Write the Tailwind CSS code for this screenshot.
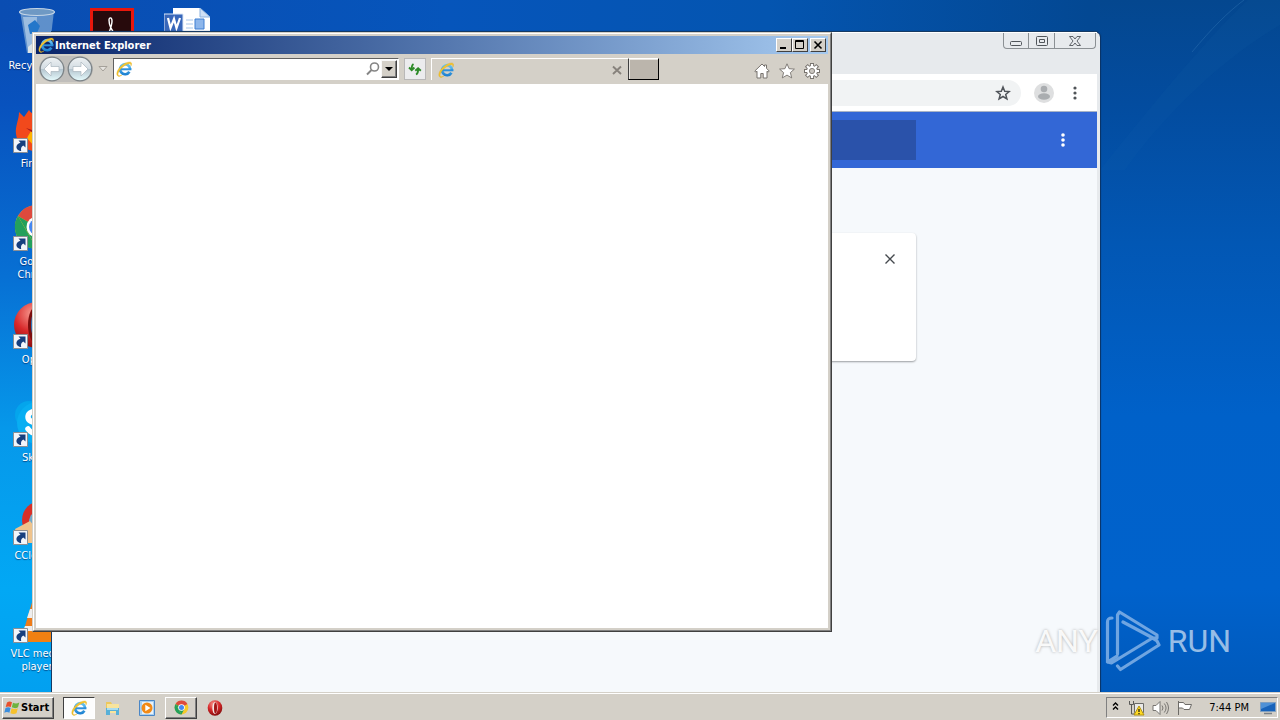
<!DOCTYPE html>
<html lang="en">
<head>
<meta charset="utf-8">
<title>Desktop</title>
<script src="https://cdn.jsdelivr.net/npm/@tailwindcss/browser@4"></script>
</head>
<body>
<svg class="absolute size-0" aria-hidden="true">
  <defs>
    <linearGradient id="ieBlue" gradientUnits="userSpaceOnUse" x1="0" y1="2" x2="0" y2="14"><stop offset="0" stop-color="#6fccf8"/><stop offset="1" stop-color="#1b7fd0"/></linearGradient>
    <linearGradient id="nav" x1="0" y1="0" x2="0" y2="1"><stop offset="0" stop-color="#eef2f4"/><stop offset=".48" stop-color="#d3dce2"/><stop offset=".5" stop-color="#b4c4ce"/><stop offset="1" stop-color="#e6fbfd"/></linearGradient>
    <radialGradient id="operaRed" cx=".4" cy=".25" r=".8"><stop offset="0" stop-color="#f79a90"/><stop offset=".5" stop-color="#d8282a"/><stop offset="1" stop-color="#7c0909"/></radialGradient>
  </defs>
  <symbol id="ie" viewBox="0 0 16 16">
    <path d="M13.400 10.800a5 5 0 1 1 .7-2.600" fill="none" stroke="url(#ieBlue)" stroke-width="2.700"/>
    <path d="M4 8.300h11.400" stroke="#2d90dc" stroke-width="2"/>
    <path d="M1.500 14.800C-.6 12.500 2.200 7 6.700 3.800 10.300 1.100 14.200.2 15.300 1.700c.6.8.3 2.200-.4 3.400.2-1.600-.3-2.400-1.600-2.300C10.500 3 5.500 6.400 3.300 10c-1.400 2.200-1.700 3.900-.6 4.500.8.400 2 .1 3.300-.6-1.800 1.500-3.600 2-4.500.9z" fill="#f4c430" stroke="#d9a514" stroke-width=".3"/>
  </symbol>
  <symbol id="chrome" viewBox="0 0 48 48">
    <circle cx="24" cy="24" r="22" fill="#f6c929"/>
    <path d="M24 24 4.900 13a22 22 0 0 1 38.200 0z" fill="#de4a3d"/>
    <path d="M4.900 13 24 46A22 22 0 0 1 4.900 13z" fill="#23a05c"/>
    <path d="M4.900 13 15 30l9 16 9-17-9-5z" fill="#23a05c"/>
    <circle cx="24" cy="24" r="10.500" fill="#fff"/><circle cx="24" cy="24" r="8" fill="#4587f1"/>
  </symbol>
  <symbol id="opera" viewBox="0 0 48 48">
    <ellipse cx="24" cy="24" rx="22" ry="23" fill="url(#operaRed)"/>
    <ellipse cx="24" cy="24" rx="8" ry="18" fill="#f3e9e6"/>
    <ellipse cx="25.500" cy="24" rx="4.500" ry="16.500" fill="#a01515"/>
  </symbol>
  <symbol id="operaLarge" viewBox="0 0 48 48">
    <ellipse cx="24" cy="24" rx="23" ry="23" fill="url(#operaRed)"/>
    <ellipse cx="25" cy="24" rx="10" ry="20" fill="#7c0d0d"/>
    <ellipse cx="27" cy="24" rx="9" ry="19" fill="#2a7cc4"/>
  </symbol>
  <symbol id="link" viewBox="0 0 15 15">
    <path d="M.5.500h14v14H.5z" fill="#f2f5fa" stroke="#8c8f94"/>
    <path d="M5.500 2.500h7v7L10.300 7.500C8.200 8.700 7.600 10.500 8.200 13 5 12.800 3 10.600 3.500 8.200 3.900 6.400 5.700 5.400 7.500 4.800z" fill="#173f7e"/>
  </symbol>
</svg>

<div class="flex min-h-screen flex-col overflow-hidden bg-[#0060c8] font-['DejaVu_Sans_Condensed','DejaVu_Sans',sans-serif] text-[11px] leading-[13px] text-black">
  <main class="relative flex-1 overflow-hidden bg-[linear-gradient(180deg,#0a4bb0_0%,#0852be_15%,#0770d4_40%,#0698ea_62%,#02a8f4_85%,#02a0f0_100%)]">
    <div class="absolute inset-x-0 top-0 h-8 bg-[linear-gradient(90deg,#0a4db2_0%,#0655bb_35%,#0455b0_60%,#034893_85%,#06498c_100%)]"></div>
    <div class="absolute top-0 right-0 bottom-0 w-[180px] bg-[linear-gradient(180deg,#04478f_0%,#034c9f_15%,#0257b4_35%,#0061c9_60%,#0062cc_85%,#0059bb_100%)]"></div>
    <svg class="absolute top-0 right-0 h-[170px] w-[180px]" viewBox="0 0 180 170" fill="none" aria-hidden="true">
      <path d="M92 52C112 28 128 12 144 0" stroke="#2b6fb0" stroke-opacity=".5"/>
      <path d="M0 170C60 95 110 35 148 0h32v25C120 60 60 120 25 170z" fill="#2170b8" fill-opacity=".08"/>
    </svg>

    <section aria-label="Desktop icons" class="absolute top-0 left-0 flex text-center text-white [text-shadow:0_1px_1px_#0038]">
      <div class="w-[74px]">
        <a href="#" class="flex h-[98px] flex-col items-center gap-1 pt-[7px]">
          <svg class="size-12 shrink-0" viewBox="0 0 48 48"><path d="M7 4h34l-5 42H14z" fill="#83add6" fill-opacity=".7"/><path d="M10 10h14l-2 34h-7z" fill="#d9eaf6" fill-opacity=".5"/><path d="M15 18l7-5 5 6-3 7-7 1zM27 25l7 3-4 8-6-3z" fill="#2477ca"/><path d="M15 40l6-5 10 4 4 7H15z" fill="#dce4e8"/><ellipse cx="24" cy="5" rx="17.500" ry="3.500" fill="#6f99c4" stroke="#c6d6e6" stroke-width="1.200"/></svg>
          <span>Recycle Bin</span></a>
        <a href="#" class="flex h-[98px] flex-col items-center gap-1 pt-[7px]">
          <span class="relative shrink-0"><svg class="size-12" viewBox="0 0 48 48"><path d="M6 7l5 5 5-7c3 5 9 6 15 6 9 3 15 10 14 20-2 10-11 15-22 15C11 46 4 38 3 29c-1-8 3-14 3-22z" fill="#f2491c"/><path d="M18 26c4-3 13-2 18 2l-5 10-11 2-6-7z" fill="#ffb300"/><path d="M13 23l6 2 5-2-4 5z" fill="#a3181c"/></svg><svg class="absolute bottom-0 left-0 size-[15px]"><use href="#link"/></svg></span>
          <span>Firefox</span></a>
        <a href="#" class="flex h-[98px] flex-col items-center gap-1 pt-[7px]">
          <span class="relative shrink-0"><svg class="size-12"><use href="#chrome"/></svg><svg class="absolute bottom-0 left-0 size-[15px]"><use href="#link"/></svg></span>
          <span>Google<br>Chrome</span></a>
        <a href="#" class="flex h-[98px] flex-col items-center gap-1 pt-[7px]">
          <span class="relative shrink-0"><svg class="size-12"><use href="#operaLarge"/></svg><svg class="absolute bottom-0 left-0 size-[15px]"><use href="#link"/></svg></span>
          <span>Opera</span></a>
        <a href="#" class="flex h-[98px] flex-col items-center gap-1 pt-[7px]">
          <span class="relative shrink-0"><svg class="size-12" viewBox="0 0 48 48"><circle cx="16" cy="16" r="14" fill="#04a5ec"/><circle cx="25" cy="24" r="21" fill="#08aef2"/><path d="M33 16c-5-6-18-5-18 2 0 8 18 5 18 12 0 6-13 7-18 0" fill="none" stroke="#fff" stroke-width="5.500" stroke-linecap="round"/></svg><svg class="absolute bottom-0 left-0 size-[15px]"><use href="#link"/></svg></span>
          <span>Skype</span></a>
        <a href="#" class="flex h-[98px] flex-col items-center gap-1 pt-[7px]">
          <span class="relative shrink-0"><svg class="size-12" viewBox="0 0 48 48"><circle cx="28" cy="23" r="19" fill="#d92f27"/><circle cx="28" cy="25" r="12" fill="#72aacb"/><path d="M2 32l15-8 8 10-4 12H6z" fill="#efc38c"/></svg><svg class="absolute bottom-0 left-0 size-[15px]"><use href="#link"/></svg></span>
          <span>CCleaner</span></a>
        <a href="#" class="flex h-[98px] flex-col items-center gap-1 pt-[7px]">
          <span class="relative shrink-0"><svg class="size-12" viewBox="0 0 48 48"><path d="M24 2l4 2 10 34H10L20 4z" fill="#ef7b18"/><path d="M17 14h14l3 9H14zM12 31h24l1 5H10z" fill="#eee"/><path d="M8 36h32l5 11H3z" fill="#f08012"/></svg><svg class="absolute bottom-0 left-0 size-[15px]"><use href="#link"/></svg></span>
          <span class="px-1">VLC media player</span></a>
      </div>
      <a href="#" aria-label="Acrobat Reader" class="flex w-[75px] justify-center pt-2">
        <svg class="size-11" viewBox="0 0 44 44"><path d="M0 0h44v44H0z" fill="#e9170c"/><path d="M3 3h38v38H3z" fill="#270a0c"/><path d="M18 27c2-5 4-9 4-14 0-4-3-4-3-1 0 5 3 11 7 15" fill="none" stroke="#fff" stroke-width="1.400"/></svg></a>
      <a href="#" aria-label="Word document" class="flex w-[75px] justify-center pt-2">
        <svg class="h-12 w-[46px]" viewBox="0 0 46 48"><path d="M9 0h27l10 9v39H9z" fill="#fff"/><path d="M36 0v9h10z" fill="#cfe0f5" stroke="#8cb2df"/><path d="M22 12h7M22 16h7M22 20h7" stroke="#a9c7ea"/><path d="M31 11h9v10h-9z" fill="#8db6eb" stroke="#3f7fd2"/><path d="M0 6h19v18H0z" fill="#3867ba" stroke="#dae7f7"/><path d="M4 10l2.500 10L10 11l2.500 9L16 10" fill="none" stroke="#fff" stroke-width="2.200"/></svg></a>
    </section>

    <section aria-label="Chrome window" class="absolute top-[31px] right-[180px] bottom-0 left-[51px] flex flex-col rounded-tr-md border-t border-l border-[#163a63] bg-[#e7eaed] pr-[3px] text-[#5f6368] shadow-[1px_0_1px_#0a3263]">
      <header class="flex h-[42px] shrink-0 justify-end border-t border-white pr-[1px]">
        <div class="flex h-4 rounded-b border border-t-0 border-[#8b9094] text-[#50555a]">
          <button aria-label="Minimize" class="grid w-[25px] place-items-center border-r border-[#8b9094]"><svg width="12" height="12" fill="none" stroke="currentColor"><rect x=".5" y="6.500" width="11" height="4" rx="1"/></svg></button>
          <button aria-label="Maximize" class="grid w-[26px] place-items-center border-r border-[#8b9094]"><svg width="12" height="10" fill="none" stroke="currentColor"><rect x=".5" y=".5" width="11" height="9" rx="1"/><path d="M3.500 3.500h5v3h-5z"/></svg></button>
          <button aria-label="Close" class="grid w-10 place-items-center"><svg width="12" height="10" fill="none" stroke="currentColor" stroke-width=".9"><path d="M.5.500H4L6 3 8 .5h3.500L8 5l3.500 4.500H8L6 7 4 9.500H.5L4 5z"/></svg></button>
        </div>
      </header>
      <div class="flex h-[37px] shrink-0 items-center gap-[13px] bg-white pr-[14px]">
        <div class="flex h-[26px] flex-1 items-center justify-end rounded-r-full bg-[#f1f3f4] pr-[10px]">
          <button aria-label="Bookmark"><svg width="16" height="16" viewBox="0 0 16 16" fill="none" stroke="#50545a" stroke-width="1.500"><path d="M8 2l1.700 4.300 4.500.3-3.500 2.900 1.200 4.400L8 11.500l-3.900 2.400 1.200-4.400-3.500-2.900 4.500-.3z"/></svg></button>
        </div>
        <button aria-label="Profile"><svg width="20" height="20"><circle cx="10" cy="10" r="10" fill="#dedfe0"/><circle cx="10" cy="6" r="3.300" fill="#aaadb0"/><ellipse cx="10" cy="13.500" rx="6" ry="3.200" fill="#aaadb0"/></svg></button>
        <button aria-label="Chrome menu"><svg width="16" height="16" fill="#505458"><circle cx="8" cy="3" r="1.600"/><circle cx="8" cy="8" r="1.600"/><circle cx="8" cy="13" r="1.600"/></svg></button>
      </div>
      <div class="flex h-[57px] shrink-0 items-center border-t border-[#a9b4c6] bg-[#3367d6] pr-[26px]">
        <div class="h-10 flex-1 bg-[#2a52aa]"></div>
        <button aria-label="Page menu" class="ml-[139px]"><svg width="16" height="16" fill="#fff"><circle cx="8" cy="3" r="1.800"/><circle cx="8" cy="8" r="1.800"/><circle cx="8" cy="13" r="1.800"/></svg></button>
      </div>
      <div class="flex-1 bg-[#f6f9fc] pt-[65px] pr-[181px]">
        <div class="flex h-32 items-start justify-end rounded bg-white pt-5 pr-5 shadow-[0_1px_2px_#9a9da0]">
          <button aria-label="Dismiss"><svg width="12" height="12" stroke="#45494e" stroke-width="1.400"><path d="M1.500 1.500l9 9M10.500 1.500l-9 9"/></svg></button>
        </div>
      </div>
    </section>

    <section aria-label="Internet Explorer window" class="absolute top-8 bottom-[60px] left-[2.5%] flex w-5/8 flex-col border border-t-[#d4d0c8] border-r-[#404040] border-b-[#404040] border-l-[#d4d0c8] bg-[#d4d0c8]">
      <div class="flex flex-1 flex-col border border-t-white border-r-[#808080] border-b-[#808080] border-l-white p-[2px]">
        <header class="flex h-[18px] shrink-0 items-center bg-linear-to-r from-[#0a246a] to-[#a6caf0] pr-[2px] pl-[2px] font-bold text-white">
          <svg class="mr-[1px] size-4"><use href="#ie"/></svg>
          <h1 class="flex-1">Internet Explorer</h1>
          <button aria-label="Minimize" class="grid h-[14px] w-4 place-items-center border border-t-white border-r-[#404040] border-b-[#404040] border-l-white bg-[#d4d0c8]"><svg width="10" height="10"><path d="M1 7h6v2H1z"/></svg></button>
          <button aria-label="Maximize" class="grid h-[14px] w-4 place-items-center border border-t-white border-r-[#404040] border-b-[#404040] border-l-white bg-[#d4d0c8]"><svg width="10" height="10" fill="none" stroke="#000"><path d="M.5.500h8v8h-8zM.5 1.500h8"/></svg></button>
          <button aria-label="Close" class="ml-[2px] grid h-[14px] w-4 place-items-center border border-t-white border-r-[#404040] border-b-[#404040] border-l-white bg-[#d4d0c8]"><svg width="10" height="10" stroke="#000" stroke-width="1.600"><path d="M1.500 1.500l7 7M8.500 1.500l-7 7"/></svg></button>
        </header>
        <nav class="flex h-[30px] shrink-0 items-center pr-2">
          <div class="ml-[3px] flex gap-[2px] rounded-full bg-[#c0bebb]">
            <button aria-label="Back"><svg width="26" height="26"><circle cx="13" cy="13" r="11.800" fill="url(#nav)" stroke="#7c8387" stroke-width="1.300"/><path d="M5 13l7-7v4.500h8v5h-8V20z" fill="#fff" stroke="#a9b5bd" stroke-width=".7"/></svg></button>
            <button aria-label="Forward"><svg width="26" height="26"><circle cx="13" cy="13" r="11.800" fill="url(#nav)" stroke="#7c8387" stroke-width="1.300"/><path d="M21 13l-7-7v4.500H6v5h8V20z" fill="#fff" stroke="#a9b5bd" stroke-width=".7"/></svg></button>
          </div>
          <button aria-label="Recent pages" class="mx-1"><svg width="12" height="8" fill="#e6e4e0" stroke="#a5a19a"><path d="M2 1.500h8L6 6z"/></svg></button>
          <div class="flex h-[22px] flex-[281] items-center border border-t-[#606060] border-r-white border-b-white border-l-[#606060] bg-white pr-[1px] pl-[2px]">
            <svg class="size-4 shrink-0"><use href="#ie"/></svg>
            <input type="text" aria-label="Address" class="min-w-0 flex-1 px-1 outline-none">
            <button aria-label="Search"><svg width="16" height="16" fill="none" stroke="#858585" stroke-width="1.600"><circle cx="9.500" cy="6" r="4"/><path d="M6.500 9L2 13.500" stroke-width="2"/></svg></button>
            <button aria-label="Show address list" class="grid h-[18px] w-4 place-items-center border border-t-[#f8f8f8] border-r-[#404040] border-b-[#404040] border-l-[#f8f8f8] bg-[#d4d0c8] shadow-[inset_-1px_-1px_#808080]"><svg width="8" height="4"><path d="M0 0h8L4 4z"/></svg></button>
          </div>
          <button aria-label="Refresh" class="ml-[5px] grid h-[22px] w-[22px] place-items-center border border-[#b9b8b8] bg-[#ececee]"><svg width="14" height="14" fill="none" stroke="#2d8a28" stroke-width="1.900"><path d="M5.500 2C3.800 3 3.500 4.500 3.700 8M1 5.500l2.700 2.700 2.700-2.700M8 12.500c1.900-1 2.300-2.500 2.100-6M7.300 8.800l2.800-2.600 2.700 2.600"/></svg></button>
          <div class="ml-[5px] flex h-[22px] flex-[186] items-center border-t border-l border-white pr-[5px] pl-[6px]">
            <svg class="size-4"><use href="#ie"/></svg>
            <button aria-label="Close tab" class="ml-auto"><svg width="12" height="12" stroke="#87827c" stroke-width="1.900"><path d="M2 2.500l8 7.500M10 2.500L2 10"/></svg></button>
          </div>
          <button aria-label="New tab" class="h-[22px] w-[31px] border border-t-white border-r-black border-b-black border-l-[#404040] bg-[#bbb5ac] shadow-[inset_1px_1px_#e8e5e0]"></button>
          <div class="flex flex-[161] items-center justify-end gap-[9px] pt-1">
            <button aria-label="Home"><svg width="16" height="16" fill="#fff" stroke="#77736e"><path d="M8 1L.8 8l1 1.200L3 8.200V15h3.800v-4.500h2.400V15H13V8.200l1.200 1 1-1.200L12.500 5.300V2h-2v1.500z"/></svg></button>
            <button aria-label="Favorites"><svg width="16" height="16" fill="#fff" stroke="#77736e" stroke-width=".9"><path d="M8 .8l2.100 4.900 5.300.4-4 3.500 1.300 5.300L8 12.100l-4.700 2.800 1.300-5.300-4-3.500 5.300-.4z"/></svg></button>
            <button aria-label="Tools"><svg width="16" height="16"><g stroke="#77736e" stroke-width="4"><path d="M8 0v16M0 8h16M2.300 2.300l11.400 11.400M13.700 2.300L2.300 13.700"/></g><circle cx="8" cy="8" r="5.900" fill="#77736e"/><g stroke="#fff" stroke-width="2.200"><path d="M8 1v14M1 8h14M3 3l10 10M13 3L3 13"/></g><circle cx="8" cy="8" r="5" fill="#fff"/><circle cx="8" cy="8" r="2.600" fill="#cbc7c1" stroke="#85817b"/></svg></button>
          </div>
        </nav>
        <div class="flex-1 bg-white"></div>
      </div>
    </section>

    <div class="absolute right-[49px] bottom-5 flex h-[62px] items-center gap-[7px] font-['Roboto',sans-serif] text-[32px] leading-none text-white/60">
      <span class="text-white/90 [text-shadow:0_0_3px_#aaa]">ANY</span>
      <svg class="h-[62px] w-14" viewBox="0 0 56 62" fill="none" stroke="#82b1e6" stroke-opacity=".85" stroke-width="3.200" stroke-linejoin="round" stroke-linecap="round"><path d="M7 8C3.500 8 2.500 9 2.500 12v40l4 1 41-25M12.500 44V5l2-3 37.500 23v3l-4 0L18 12M12.500 56l3 3.500L54 35l-2-4-8-5M2.500 52L12 46"/></svg>
      <span>RUN</span>
    </div>
  </main>

  <footer class="flex h-7 shrink-0 items-center border-t border-[#d4d0c8] bg-[#d4d0c8] pr-[2px] pl-[2px] shadow-[inset_0_1px_white]">
    <button class="mt-[2px] flex h-[22px] items-center border border-t-white border-r-[#404040] border-b-[#404040] border-l-white pr-1 pl-[1px] font-bold shadow-[inset_-1px_-1px_#808080]">
      <svg class="mr-[1px]" width="16" height="16"><path d="M3 2.500C5 1.200 6.500 1.500 8 2.300L6.800 7C5.200 6.200 3.500 6.200 1.700 7z" fill="#e8502c"/><path d="M9 2.700c2 1 4 1 6.300-.2L14 7.300c-2 1.200-4.200 1-6.200 0z" fill="#6db33f"/><path d="M1.500 8c2-.9 3.500-.8 5.100 0l-1.200 4.700c-1.600-.8-3.300-.8-5.100 0z" fill="#3b8ede"/><path d="M7.600 8.300c2 1 4 1 6.200-.1l-1.300 5c-2 1.100-4.100 1-6.100 0z" fill="#f6c12c"/></svg>
      Start</button>
    <div class="mt-[2px] ml-[9px] flex items-center">
      <button aria-label="Internet Explorer" class="grid h-[22px] w-8 place-items-center border border-t-[#404040] border-r-white border-b-white border-l-[#404040] bg-[#fdfdfd]"><svg class="size-4"><use href="#ie"/></svg></button>
      <button aria-label="Windows Explorer" class="ml-[9px] grid h-[22px] w-[18px] place-items-center"><svg width="16" height="16"><path d="M1 2h5l1 2h6v4H1z" fill="#ecc85e"/><path d="M2 4h12v9H2z" fill="#f8e49c"/><path d="M1 8h13v7h-3v-4H5v4H1z" fill="#58b0d8"/><path d="M2 8h11v2H2z" fill="#a9dcf0"/></svg></button>
      <button aria-label="Media Player" class="ml-4 grid h-[22px] w-[18px] place-items-center"><svg width="16" height="16"><path d="M.5.500h15v15H.5z" fill="#a8d0f2" stroke="#4a86c6"/><path d="M3 2h11v12H3z" fill="#e8f2fa"/><circle cx="8" cy="8" r="5.500" fill="#f28a17"/><path d="M6.300 4.800v6.400L11.500 8z" fill="#fff"/></svg></button>
      <button aria-label="Google Chrome" class="ml-[9px] grid h-[22px] w-8 place-items-center border border-t-white border-r-[#404040] border-b-[#404040] border-l-white shadow-[inset_-1px_-1px_#808080]"><svg class="size-[15px]"><use href="#chrome"/></svg></button>
      <button aria-label="Opera" class="ml-[9px] grid h-[22px] w-[18px] place-items-center"><svg class="size-4"><use href="#opera"/></svg></button>
    </div>
    <div class="mt-[2px] ml-auto flex h-[21px] items-center border border-t-[#808080] border-r-white border-b-white border-l-[#808080] pr-[1px] pl-1">
      <button aria-label="Show hidden icons"><svg width="9" height="14" fill="none" stroke="#000" stroke-width="1.400"><path d="M2 4.500L4.500 2 7 4.500M2 8.500L4.500 6 7 8.500"/></svg></button>
      <button aria-label="Network" class="ml-2"><svg width="17" height="16"><path d="M6.500 3.500h9v9h-9z" fill="#e9e9e7" stroke="#6b6b68"/><path d="M1.500 1v3.500h4V1M3.500 4.500V14h4" fill="none" stroke="#595957"/><path d="M11 6l5 9H6z" fill="#ffda22" stroke="#b29312"/><path d="M11 9v3M11 13v1.200" stroke="#111" stroke-width="1.200"/></svg></button>
      <button aria-label="Volume" class="ml-[7px]"><svg width="17" height="16" fill="#fff" stroke="#777571"><path d="M1 5.500h3l4-4v13l-4-4H1z"/><path d="M10 5.500q2 2.500 0 5M12.300 3.500q3.500 4.500 0 9M14.500 2q4 6 0 12" fill="none"/></svg></button>
      <button aria-label="Action Center" class="ml-[7px]"><svg width="17" height="16" fill="#fff" stroke="#6d6b67"><path d="M2.500 1v14M2.500 2.500h5l1.500 2h6.500l-2 5H8l-1.500-1.500h-4z"/></svg></button>
      <time class="ml-4">7:44 PM</time>
      <button aria-label="Show desktop" class="ml-[11px]"><svg width="16" height="14"><path d="M.5 1.500h15v9H.5z" fill="#1863ba" stroke="#7f9fc1"/><path d="M1 2h14L1 8z" fill="#4f91d6"/><path d="M4 12.500h8" stroke="#7a8087" stroke-width="1.500"/></svg></button>
    </div>
  </footer>
</div>
</body>
</html>
